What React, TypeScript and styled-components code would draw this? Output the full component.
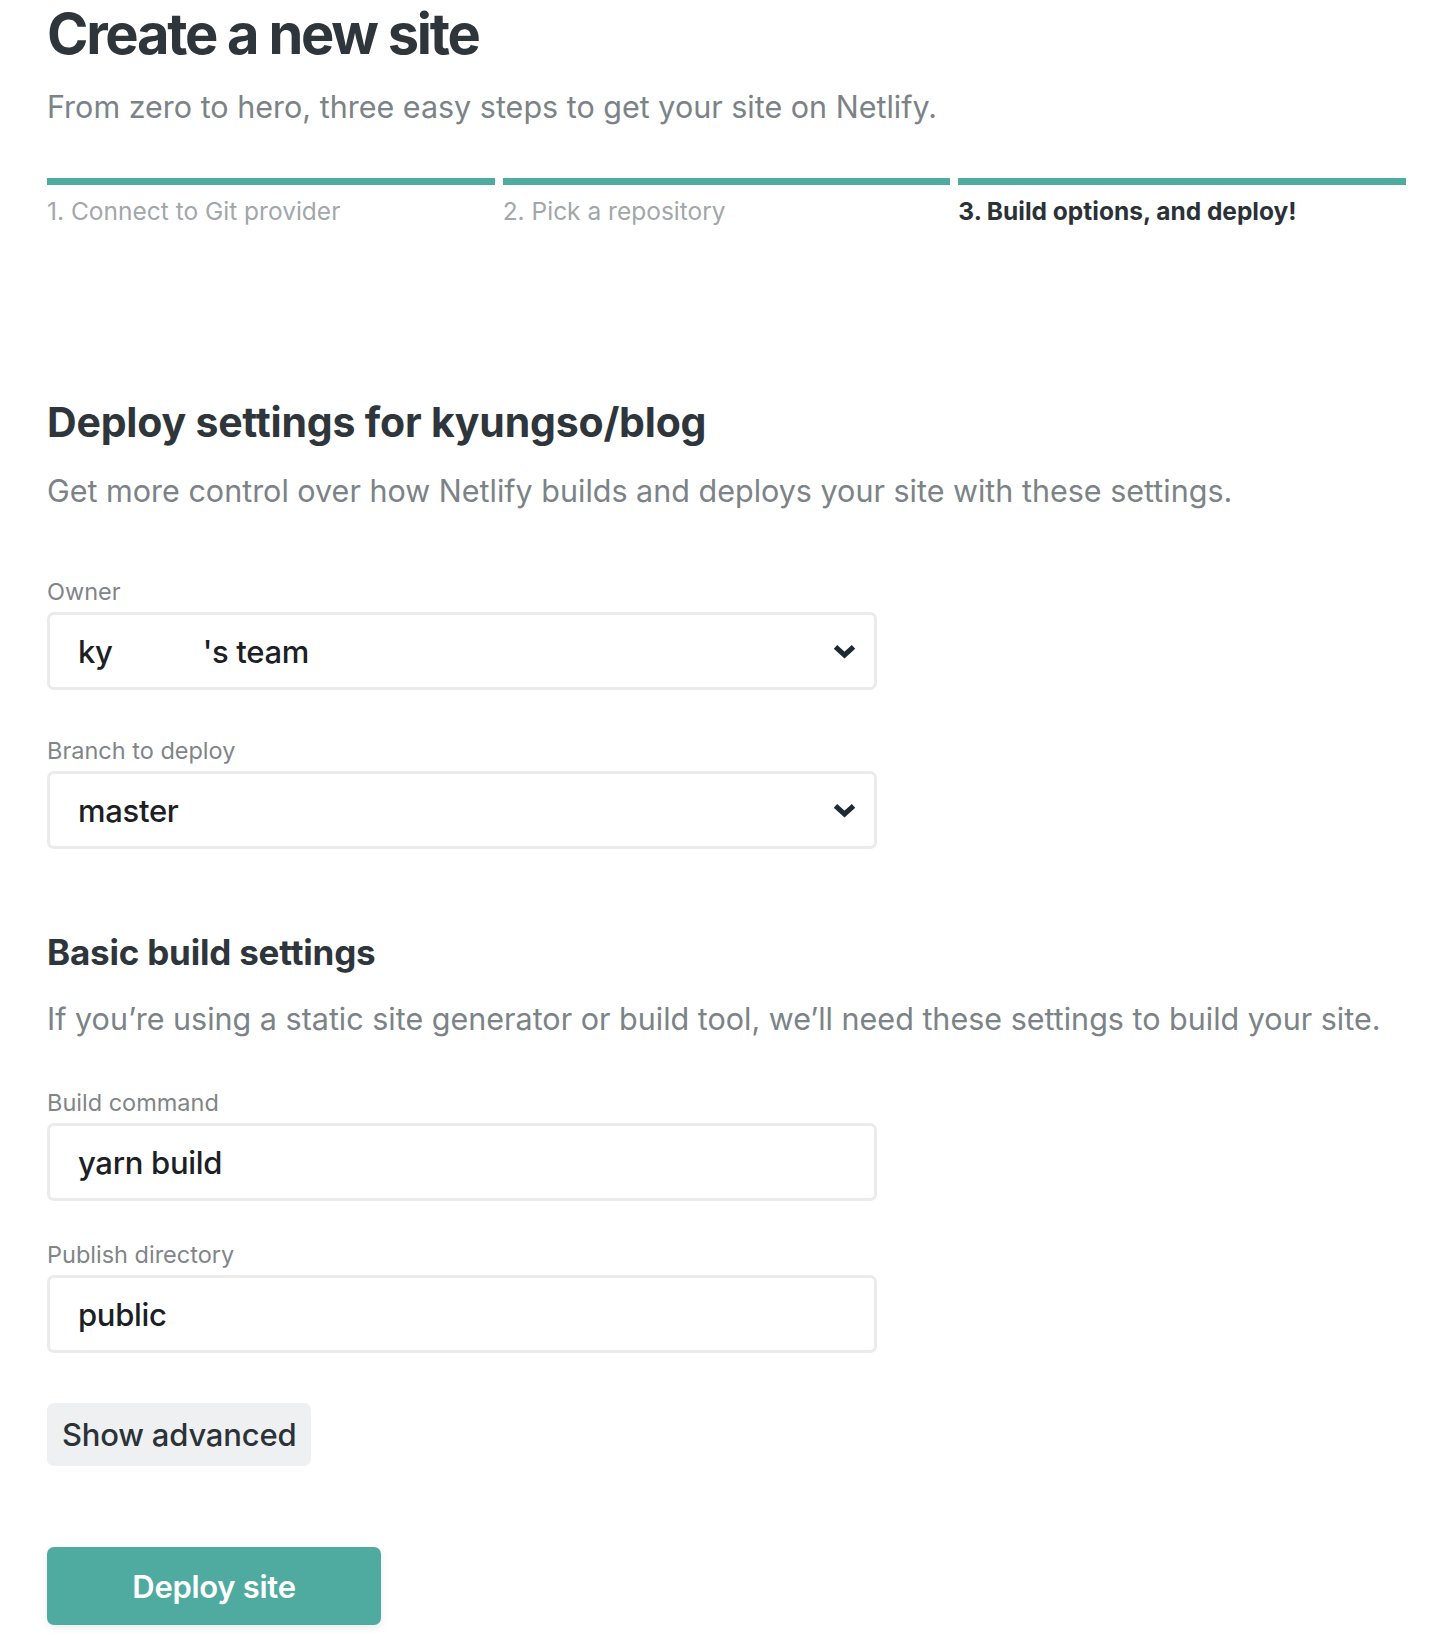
import React from "react";
import styled, { createGlobalStyle } from "styled-components";

const GlobalStyle = createGlobalStyle`
  html, body {
    margin: 0;
    padding: 0;
    background: #ffffff;
  }
  body {
    font-family: Inter, "Noto Sans", "Liberation Sans", sans-serif;
    -webkit-font-smoothing: antialiased;
  }
  * { box-sizing: border-box; }
`;

const Page = styled.main`
  width: 1453px;
  padding: 2px 47px 8px 47px;
  display: flex;
  flex-direction: column;
`;

const Title = styled.h1`
  margin: 0;
  font-size: 56px;
  line-height: 64px;
  font-weight: 700;
  letter-spacing: -2.25px;
  color: #2e363b;
`;

const Lead = styled.p<{ $top: number }>`
  margin: ${(p) => p.$top}px 0 0 0;
  font-size: 30.5px;
  line-height: 40px;
  font-weight: 400;
  letter-spacing: 0;
  color: #7b8387;
`;

const Steps = styled.ol`
  list-style: none;
  margin: 51px 0 0 0;
  padding: 0;
  display: grid;
  grid-template-columns: repeat(3, 1fr);
  column-gap: 8px;
`;

const Step = styled.li<{ $active?: boolean }>`
  border-top: 7px solid #4fab9f;
  padding-top: 12px;
  font-size: 24.5px;
  line-height: 28px;
  font-weight: ${(p) => (p.$active ? 700 : 400)};
  color: ${(p) => (p.$active ? "#2b3237" : "#a2a7aa")};
`;

const SectionTitle = styled.h2<{ $top: number; $size: number }>`
  margin: ${(p) => p.$top}px 0 0 0;
  font-size: ${(p) => p.$size}px;
  line-height: ${(p) => Math.round(p.$size * 1.3)}px;
  font-weight: 700;
  letter-spacing: -0.2px;
  color: #2e363b;
`;

const Field = styled.div<{ $top: number }>`
  margin-top: ${(p) => p.$top}px;
  display: flex;
  flex-direction: column;
  gap: 6px;
  width: 830px;
`;

const Label = styled.label`
  font-size: 23.5px;
  line-height: 28px;
  font-weight: 400;
  color: #7f8589;
`;

const Box = styled.div`
  height: 78px;
  border: 3px solid #ebebeb;
  border-radius: 7px;
  background: #ffffff;
  display: flex;
  align-items: center;
  justify-content: space-between;
  padding: 0 17px 0 28px;
  font-size: 31px;
  font-weight: 500;
  letter-spacing: -0.3px;
  color: #1b2025;
`;

const Value = styled.span`
  display: inline-flex;
  align-items: center;
  white-space: pre;
`;

const Redacted = styled.span`
  display: inline-block;
  width: 90px;
`;

const Chevron = styled.svg`
  width: 25px;
  height: 17px;
  flex: none;
`;

const GhostButton = styled.button`
  margin-top: 50px;
  align-self: flex-start;
  height: 63px;
  padding: 0 15px;
  border: none;
  border-radius: 7px;
  background: #eff0f2;
  font-family: inherit;
  font-size: 31px;
  font-weight: 500;
  letter-spacing: -0.2px;
  color: #2b3338;
  cursor: pointer;
`;

const PrimaryButton = styled.button`
  margin-top: 81px;
  align-self: flex-start;
  width: 334px;
  height: 78px;
  border: none;
  border-radius: 7px;
  background: #4fab9f;
  box-shadow: 0 3px 8px rgba(0, 0, 0, 0.08);
  font-family: inherit;
  font-size: 31px;
  font-weight: 600;
  letter-spacing: -0.3px;
  color: #ffffff;
  cursor: pointer;
`;

const ChevronIcon = () => (
  <Chevron viewBox="0 0 25 17" aria-hidden="true">
    <path
      d="M3.5 3.8 L12.5 12.2 L21.5 3.8"
      fill="none"
      stroke="#1d2a33"
      strokeWidth="5"
      strokeLinejoin="miter"
    />
  </Chevron>
);

export default function App() {
  return (
    <>
      <GlobalStyle />
      <Page>
        <Title>Create a new site</Title>
        <Lead $top={21}>From zero to hero, three easy steps to get your site on Netlify.</Lead>

        <Steps>
          <Step>1. Connect to Git provider</Step>
          <Step>2. Pick a repository</Step>
          <Step $active>3. Build options, and deploy!</Step>
        </Steps>

        <SectionTitle $top={171} $size={41}>Deploy settings for kyungso/blog</SectionTitle>
        <Lead $top={22}>Get more control over how Netlify builds and deploys your site with these settings.</Lead>

        <Field $top={67}>
          <Label>Owner</Label>
          <Box>
            <Value>
              ky<Redacted />'s team
            </Value>
            <ChevronIcon />
          </Box>
        </Field>

        <Field $top={47}>
          <Label>Branch to deploy</Label>
          <Box>
            <Value>master</Value>
            <ChevronIcon />
          </Box>
        </Field>

        <SectionTitle $top={80} $size={35}>Basic build settings</SectionTitle>
        <Lead $top={24}>If you’re using a static site generator or build tool, we’ll need these settings to build your site.</Lead>

        <Field $top={50}>
          <Label>Build command</Label>
          <Box>
            <Value>yarn build</Value>
          </Box>
        </Field>

        <Field $top={40}>
          <Label>Publish directory</Label>
          <Box>
            <Value>public</Value>
          </Box>
        </Field>

        <GhostButton type="button">Show advanced</GhostButton>
        <PrimaryButton type="button">Deploy site</PrimaryButton>
      </Page>
    </>
  );
}
